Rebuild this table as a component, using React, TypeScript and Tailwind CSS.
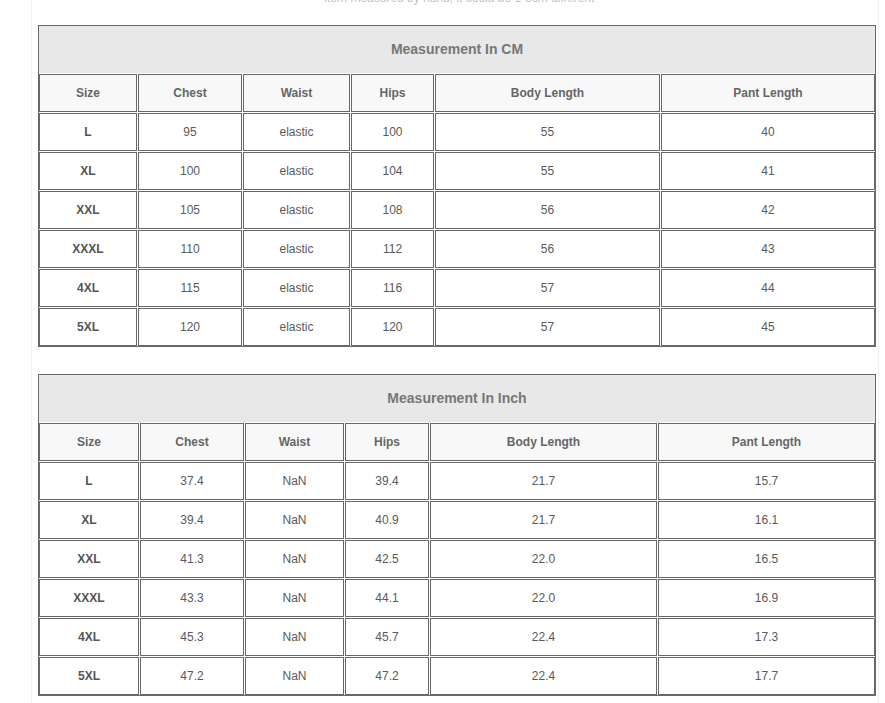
import React from "react";

type TableProps = {
  title: string;
  cols: string;
  rows: string[][];
};

const headers = ["Size", "Chest", "Waist", "Hips", "Body Length", "Pant Length"];

function SizeTable({ title, cols, rows }: TableProps) {
  return (
    <div className="border border-[#686868] bg-white">
      <div className="h-[47px] bg-[#e8e8e8] flex items-center justify-center text-[14px] font-bold text-[#777]">
        {title}
      </div>
      <div className={`grid gap-[1px] mt-[1px] ${cols}`}>
        {headers.map((h) => (
          <div
            key={h}
            className="h-[38px] border border-[#686868] bg-[#f8f8f8] flex items-center justify-center text-[12px] font-bold text-[#666]"
          >
            {h}
          </div>
        ))}
        {rows.map((r, i) =>
          r.map((v, j) => (
            <div
              key={`${i}-${j}`}
              className={`h-[38px] border border-[#686868] bg-white flex items-center justify-center text-[12px] ${
                j === 0 ? "font-bold text-[#555]" : "text-[#5a5a5a]"
              }`}
            >
              {v}
            </div>
          ))
        )}
      </div>
    </div>
  );
}

const cmRows = [
  ["L", "95", "elastic", "100", "55", "40"],
  ["XL", "100", "elastic", "104", "55", "41"],
  ["XXL", "105", "elastic", "108", "56", "42"],
  ["XXXL", "110", "elastic", "112", "56", "43"],
  ["4XL", "115", "elastic", "116", "57", "44"],
  ["5XL", "120", "elastic", "120", "57", "45"],
];

const inchRows = [
  ["L", "37.4", "NaN", "39.4", "21.7", "15.7"],
  ["XL", "39.4", "NaN", "40.9", "21.7", "16.1"],
  ["XXL", "41.3", "NaN", "42.5", "22.0", "16.5"],
  ["XXXL", "43.3", "NaN", "44.1", "22.0", "16.9"],
  ["4XL", "45.3", "NaN", "45.7", "22.4", "17.3"],
  ["5XL", "47.2", "NaN", "47.2", "22.4", "17.7"],
];

export default function App() {
  return (
    <div
      className="w-[885px] h-[703px] bg-white overflow-hidden"
      style={{ fontFamily: '"Liberation Sans", Arial, sans-serif' }}
    >
      <div className="ml-[31px] w-[848px] h-full border-x border-[#f1f1f1]">
        <div className="h-[25px] overflow-hidden flex justify-center pl-[8px]">
          <div className="text-[12px] leading-[14px] -mt-[9px] text-[#c4c4c4]">
            Item measured by hand, it could be 1-3cm different
          </div>
        </div>
        <div className="ml-[6px] w-[838px]">
          <SizeTable
            title="Measurement In CM"
            cols="grid-cols-[98px_104px_107px_83px_225px_214px]"
            rows={cmRows}
          />
          <div className="h-[27px]" />
          <SizeTable
            title="Measurement In Inch"
            cols="grid-cols-[100px_104px_99px_84px_227px_217px]"
            rows={inchRows}
          />
        </div>
      </div>
    </div>
  );
}
